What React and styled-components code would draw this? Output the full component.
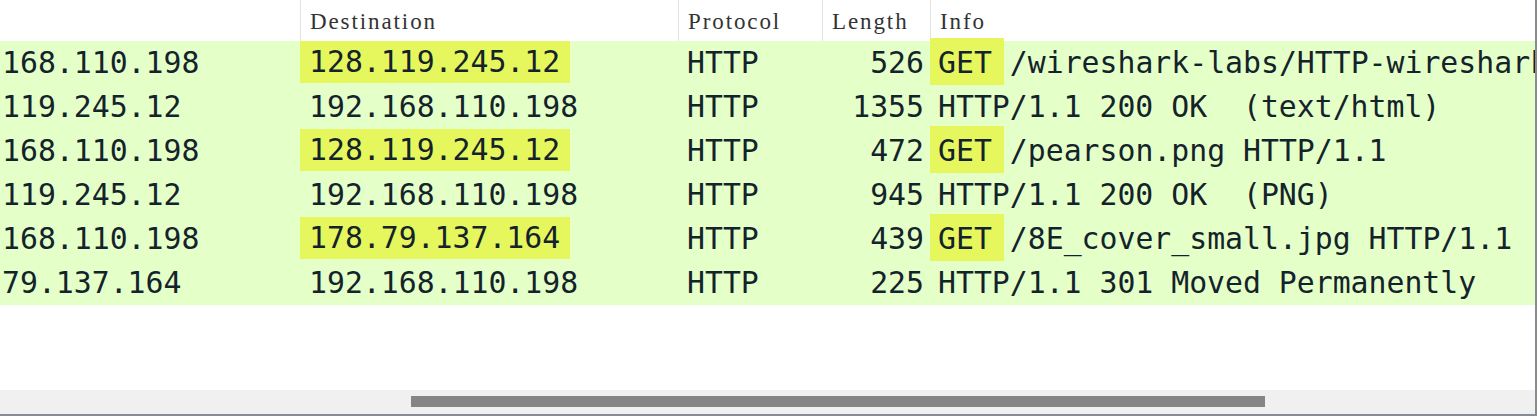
import React from "react";
import styled, { createGlobalStyle } from "styled-components";

const GlobalStyle = createGlobalStyle`
    html, body {
        margin: 0;
        padding: 0;
        background: #ffffff;
        overflow: hidden;
    }
`;

const COLUMNS = "300px 378px 144px 108px 1fr";

const Window = styled.div`
    width: 1537px;
    height: 416px;
    box-sizing: border-box;
    display: flex;
    flex-direction: column;
    background: #ffffff;
    border-right: 2px solid #868b94;
    border-bottom: 2px solid #868b94;
    overflow: hidden;
`;

const HeaderRow = styled.div`
    display: grid;
    grid-template-columns: ${COLUMNS};
    height: 41px;
    flex-shrink: 0;
`;

const HeaderCell = styled.div`
    display: flex;
    align-items: center;
    padding: 3px 0 0 9px;
    border-left: ${({ $first }) => ($first ? "none" : "1px solid #e3e3e3")};
    font-family: "Liberation Serif", "Times New Roman", serif;
    font-size: 23px;
    letter-spacing: 1.9px;
    color: #333333;
    white-space: pre;
`;

const PacketList = styled.div`
    display: flex;
    flex-direction: column;
    flex-shrink: 0;
`;

const PacketRow = styled.div`
    display: grid;
    grid-template-columns: ${COLUMNS};
    height: 44px;
    background: #e4ffc7;
    font-family: "DejaVu Sans Mono", "Liberation Mono", monospace;
    font-size: 29.8px;
    line-height: 34px;
    color: #14232b;
    white-space: pre;
`;

const Cell = styled.div`
    display: flex;
    align-items: center;
    justify-content: ${({ $right }) => ($right ? "flex-end" : "flex-start")};
    padding: ${({ $pad }) => $pad || "0 0 0 9px"};
    min-width: 0;
`;

const InfoCell = styled.div`
    display: flex;
    align-items: center;
    padding-left: 8px;
    min-width: 0;
`;

const AddrMark = styled.span`
    align-self: flex-start;
    display: flex;
    align-items: center;
    height: 42px;
    padding: 0 10px 0 9px;
    background: #e6f75e;
`;

const MethodMark = styled.span`
    align-self: stretch;
    display: flex;
    align-items: center;
    margin: -3px 0 0 -8px;
    padding: 3px 12px 0 8px;
    background: #e6f75e;
`;

const InfoText = styled.span`
    margin-left: ${({ $afterMark }) => ($afterMark ? "6px" : "0")};
`;

const Filler = styled.div`
    flex: 1;
`;

const ScrollTrack = styled.div`
    height: 24px;
    flex-shrink: 0;
    background: #f0f0f0;
    display: flex;
    align-items: center;
    padding-left: 411px;
`;

const ScrollThumb = styled.div`
    width: 854px;
    height: 11px;
    margin-top: -1px;
    background: #858585;
`;

const packets = [
    { src: "168.110.198", dst: "128.119.245.12", len: 526, get: true, info: "/wireshark-labs/HTTP-wireshark-file4.html HTTP/1.1" },
    { src: "119.245.12", dst: "192.168.110.198", len: 1355, info: "HTTP/1.1 200 OK  (text/html)" },
    { src: "168.110.198", dst: "128.119.245.12", len: 472, get: true, info: "/pearson.png HTTP/1.1" },
    { src: "119.245.12", dst: "192.168.110.198", len: 945, info: "HTTP/1.1 200 OK  (PNG)" },
    { src: "168.110.198", dst: "178.79.137.164", len: 439, get: true, info: "/8E_cover_small.jpg HTTP/1.1" },
    { src: "79.137.164", dst: "192.168.110.198", len: 225, info: "HTTP/1.1 301 Moved Permanently" },
];

function App() {
    return (
        <>
            <GlobalStyle />
            <Window>
                <HeaderRow>
                    <HeaderCell $first></HeaderCell>
                    <HeaderCell>Destination</HeaderCell>
                    <HeaderCell>Protocol</HeaderCell>
                    <HeaderCell>Length</HeaderCell>
                    <HeaderCell>Info</HeaderCell>
                </HeaderRow>
                <PacketList>
                    {packets.map((p, i) => (
                        <PacketRow key={i}>
                            <Cell $pad="0 0 0 2px">{p.src}</Cell>
                            {p.get ? (
                                <Cell $pad="0">
                                    <AddrMark>{p.dst}</AddrMark>
                                </Cell>
                            ) : (
                                <Cell>{p.dst}</Cell>
                            )}
                            <Cell>HTTP</Cell>
                            <Cell $right $pad="0 6px 0 0">{p.len}</Cell>
                            <InfoCell>
                                {p.get && <MethodMark>GET</MethodMark>}
                                <InfoText $afterMark={p.get}>{p.info}</InfoText>
                            </InfoCell>
                        </PacketRow>
                    ))}
                </PacketList>
                <Filler />
                <ScrollTrack>
                    <ScrollThumb />
                </ScrollTrack>
            </Window>
        </>
    );
}

export default App;
